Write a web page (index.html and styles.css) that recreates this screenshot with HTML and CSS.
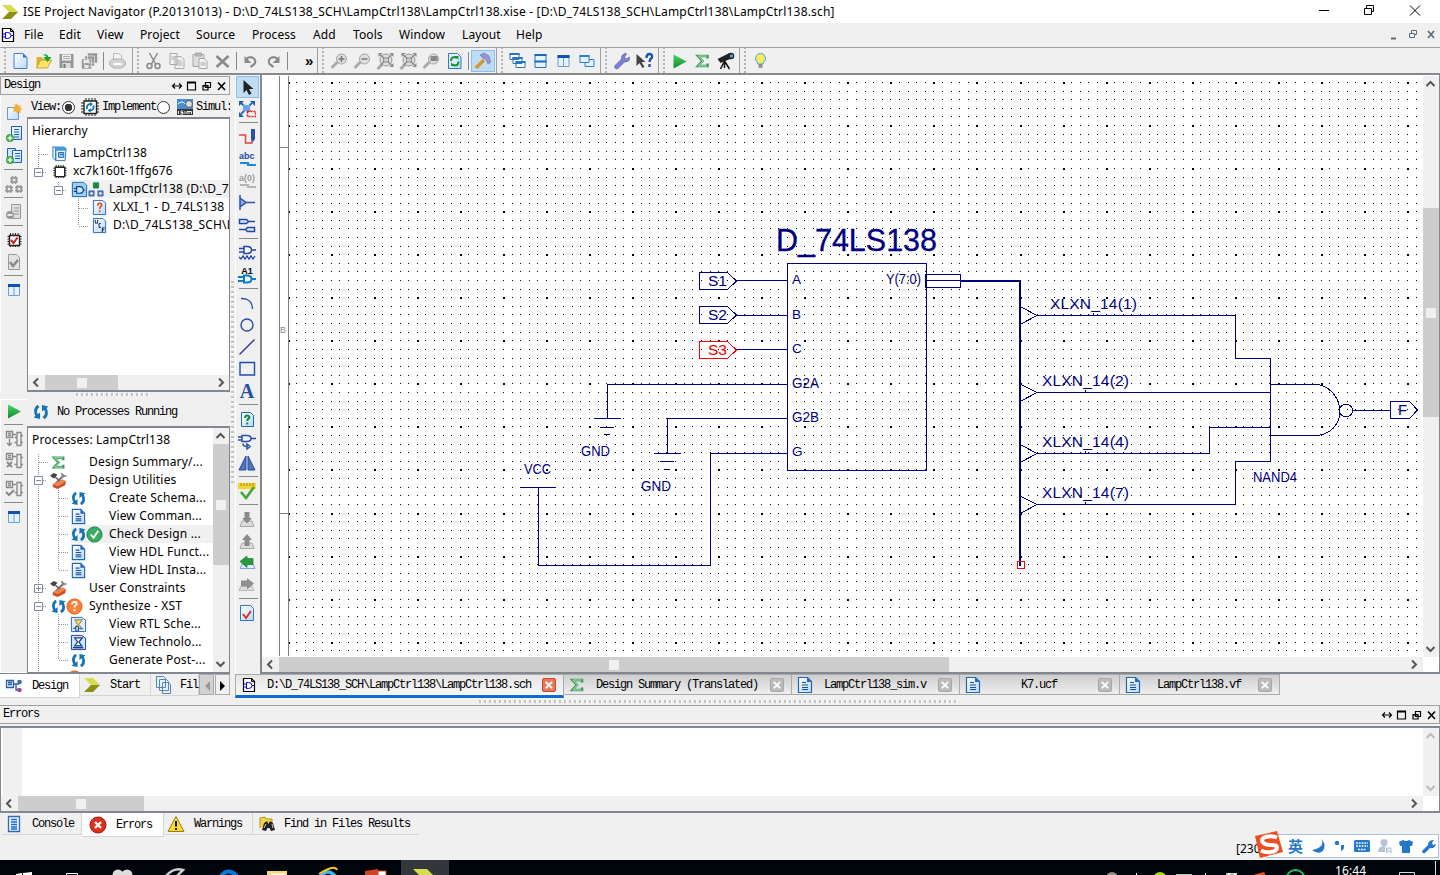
FILE: index.html
```html
<!DOCTYPE html>
<html lang="en">
<head>
<meta charset="utf-8">
<title>ISE Project Navigator</title>
<link rel="stylesheet" href="styles.css">
</head>
<body>
<svg class="defs" width="0" height="0">
  <defs>
    <linearGradient id="gPage" x1="0" y1="0" x2="1" y2="1"><stop offset="0" stop-color="#fff"/><stop offset="1" stop-color="#b9d8fb"/></linearGradient>
    <linearGradient id="gGreen" x1="0" y1="0" x2="0" y2="1"><stop offset="0" stop-color="#4fd467"/><stop offset="1" stop-color="#0a8a2a"/></linearGradient>
    <symbol id="chev" viewBox="0 0 18 18"><path d="M1 2h9l7 7H8z" fill="#d7dc4e"/><path d="M8 9h9l-7 7H1z" fill="#8b8f14"/></symbol>
    <symbol id="sch" viewBox="0 0 18 18"><path d="M3.500 2.500h8l3 3v10h-11z" fill="#fff" stroke="#000" stroke-width="1.200"/><path d="M11.500 2.500v3h3" fill="none" stroke="#000"/><path d="M6.500 6.500h2q3.500 0 3.500 3t-3.500 3h-2zM4 8h2.500m-2.500 3h2.500m5.500-1.500h2" fill="none" stroke="#00f"/></symbol>
    <symbol id="new" viewBox="0 0 18 18"><path d="M2.500 1.500h9l4 4v11h-13z" fill="url(#gPage)" stroke="#4a7fd0"/><path d="M11.500 1.500v4h4z" fill="#2f6bd0"/></symbol>
    <symbol id="open" viewBox="0 0 18 18"><path d="M2 16V5h5l2 2h5v3" fill="#d9b32e"/><path d="M2 16l4-8h11l-4 8z" fill="#ffe268" stroke="#b48b12" stroke-width=".7"/><path d="M8 3q5-2 6 2h3l-4 5-4-5h3q-1-2-4-2z" fill="#18a432"/></symbol>
    <symbol id="save" viewBox="0 0 18 18"><path d="M2 2h14v14H2z" fill="#979797"/><path d="M4.500 2.500h9v6h-9z" fill="#eee"/><path d="M5.500 4.500h7m-7 2h7" stroke="#aaa"/><path d="M5 11h8v5H5z" fill="#dadada"/><path d="M6 12h2v4H6z" fill="#777"/></symbol>
    <symbol id="saveall" viewBox="0 0 18 18"><g stroke="#eee" stroke-width=".6" fill="#979797"><path d="M7 1h10v10H7zM4 4h10v10H4zM1 7h10v10H1z"/></g><path d="M3 8h6v3H3zM4 13h4v3H4z" fill="#e8e8e8"/></symbol>
    <symbol id="print" viewBox="0 0 18 18"><path d="M5 8V1.500h5l3 2V8" fill="#f5f5f5" stroke="#bbb"/><path d="M1 10l3-3h10l3 3v3l-4 3H5l-4-3z" fill="#d2d2d2" stroke="#b0b0b0"/><path d="M5 12h8" stroke="#fff" stroke-width="2"/></symbol>
    <symbol id="cut" viewBox="0 0 18 18"><g fill="none" stroke="#8a8a8a" stroke-width="1.500"><path d="M5 1l6 11M13 1L7 12"/><circle cx="5" cy="14" r="2.500"/><circle cx="13" cy="14" r="2.500"/></g></symbol>
    <symbol id="copy" viewBox="0 0 18 18"><g fill="#f1f1f1" stroke="#aaa"><path d="M2.500 1.500h7v11h-7zM7.500 4.500h6l3 3v9h-9z"/><path d="M9 9h5m-5 2h6m-6 2h6M4 5h3m-3 2h3"/></g></symbol>
    <symbol id="paste" viewBox="0 0 18 18"><g fill="#ddd" stroke="#a5a5a5"><path d="M2.500 2.500h11v12h-11z"/><path d="M5 1h6v3H5z" fill="#bbb"/><path d="M8.500 6.500h5l3 3v7h-8z" fill="#f3f3f3"/><path d="M10 11h5m-5 2h5"/></g></symbol>
    <symbol id="del" viewBox="0 0 18 18"><path d="M3 4l12 11M15 4L3 15" stroke="#8b8b8b" stroke-width="2.800"/></symbol>
    <symbol id="undo" viewBox="0 0 18 18"><path d="M4 8c5-6 12-1 9 4l-4 3" fill="none" stroke="#8b8b8b" stroke-width="2.200"/><path d="M3 4v7h7z" fill="#8b8b8b"/></symbol>
    <symbol id="redo" viewBox="0 0 18 18"><path d="M14 8c-5-6-12-1-9 4l4 3" fill="none" stroke="#8b8b8b" stroke-width="2.200"/><path d="M15 4v7H8z" fill="#8b8b8b"/></symbol>
    <symbol id="mag" viewBox="0 0 18 18"><path d="M1 16l6-6" stroke="#aaa" stroke-width="3"/><circle cx="11" cy="7" r="5" fill="#dedede" stroke="#a3a3a3"/></symbol>
    <symbol id="zin" viewBox="0 0 18 18"><use href="#mag"/><path d="M8 7h6m-3-3v6" stroke="#777" stroke-width="1.500"/></symbol>
    <symbol id="zout" viewBox="0 0 18 18"><use href="#mag"/><path d="M8 7h6" stroke="#777" stroke-width="1.500"/></symbol>
    <symbol id="zfit" viewBox="0 0 18 18"><path d="M1 17l5-5" stroke="#aaa" stroke-width="3"/><circle cx="9.500" cy="8" r="6" fill="#ddd" stroke="#999"/><path d="M4 3l11 10M15 3L4 13" stroke="#888" stroke-width="1.200"/><path d="M7 6h5v4H7z" fill="#ccc" stroke="#777" stroke-width=".7"/><path d="M2 1h4L2 5zM17 1h-4l4 4zM17 15h-4l4-4z" fill="#888"/></symbol>
    <symbol id="zbox" viewBox="0 0 18 18"><use href="#mag"/><path d="M8 4h7v5H8z" fill="#888"/></symbol>
    <symbol id="refresh" viewBox="0 0 18 18"><path d="M3 1.500h9l3.500 3.500v11.500H3z" fill="url(#gPage)" stroke="#2c7bd0"/><path d="M5.500 9q0-4 4-4l2 1M13 9.500q0 4-4 4l-2-1" fill="none" stroke="#14962e" stroke-width="2"/><path d="M10 4h3v4zM8.500 14h-3v-4z" fill="#14962e"/></symbol>
    <symbol id="hammer" viewBox="0 0 18 18"><path d="M2 16l8-8" stroke="#d9952a" stroke-width="3.400"/><path d="M6 3l4-2 5 3 1 4 1 2-3 2-2-5-3-1z" fill="#9696cf" stroke="#6b6ba8" stroke-width=".6"/></symbol>
    <symbol id="cascade" viewBox="0 0 18 18"><g fill="#fff" stroke="#2775bf"><path d="M1.500 1.500h9v6h-9zM4.500 5.500h9v6h-9zM7.500 9.500h9v6h-9z"/><path d="M1 2h10M4 6h10M7 10h10" stroke-width="2"/></g></symbol>
    <symbol id="tileh" viewBox="0 0 18 18"><path d="M3.500 2.500h11v13h-11z" fill="#e5f2ff" stroke="#2775bf"/><path d="M3 3h12M3 9.500h12" stroke="#1d67bd" stroke-width="2"/></symbol>
    <symbol id="tilev" viewBox="0 0 18 18"><path d="M3.500 3.500h11v11h-11zM9 3v12" fill="#e5f2ff" stroke="#6d9fd6"/><path d="M3 4.500h12" stroke="#0e50b5" stroke-width="3"/></symbol>
    <symbol id="float" viewBox="0 0 18 18"><g fill="#e5f2ff" stroke="#2a80d6"><path d="M7.500 7.500h9v7h-9z"/><path d="M2.500 3.500h9v7h-9z"/><path d="M2 4h10" stroke-width="2"/></g></symbol>
    <symbol id="wrench" viewBox="0 0 18 18"><path d="M2 14l7-7q-1-4 4-6l1 1-2 3 2 2 3-2q1 5-5 5l-7 7q-3 0-3-3z" fill="#7d80cc" stroke="#5557a0" stroke-width=".6"/></symbol>
    <symbol id="what" viewBox="0 0 18 18"><path d="M1 2v12l3-3 3 5 2-1-3-5h4z" fill="#444"/><path d="M11 6q0-4 3-4t2.500 3.500q-2.500 2-2.500 4.500M14 12v3" fill="none" stroke="#1550b5" stroke-width="2.300"/></symbol>
    <symbol id="play" viewBox="0 0 18 18"><path d="M3 2.500l13 7-13 7z" fill="url(#gGreen)"/></symbol>
    <symbol id="sigma" viewBox="0 0 18 18"><path d="M14 6.500V4H4.500L9 9l-4.500 5H14v-2.500" fill="none" stroke="#3c9a5c" stroke-width="2.600"/><path d="M13.500 4H5l4.500 5L5 14h8.500" fill="none" stroke="#b9ebc6" stroke-width=".9"/></symbol>
    <symbol id="scope" viewBox="0 0 18 18"><path d="M1 7l12-6 3 5-12 5z" fill="#222"/><circle cx="14.500" cy="4" r="3.300" fill="#222"/><circle cx="15" cy="4" r="1.700" fill="#49a8d8"/><path d="M8 9l-4 8M8 9v7M8 9l5 8" stroke="#111" stroke-width="1.500"/></symbol>
    <symbol id="bulb" viewBox="0 0 18 18"><path d="M6.500 12q0-2-2.500-4 0-6.500 5-6.500t5 6.500q-2.500 2-2.500 4z" fill="#ffe95d" stroke="#49a2e8"/><path d="M7 13h4M7 15h4" stroke="#777" stroke-width="1.600"/></symbol>
    <symbol id="page" viewBox="0 0 18 18"><path d="M2.500 1.500h9l4 4v11h-13z" fill="url(#gPage)" stroke="#2465b8" stroke-width="1.200"/><path d="M11 1.500v4.500h4.500" fill="#2465b8"/><path d="M6 6.500h4m-4 2.500h6m-6 2.500h6m-6 2h6" stroke="#164fa0" stroke-width="1.200"/></symbol>
    <symbol id="newsrc" viewBox="0 0 18 18"><path d="M2.500 4.500h11v12h-11z" fill="url(#gPage)" stroke="#6e96d0"/><path d="M12 0l1 3 3-1-1 3 3 1-3 1 1 3-3-1-1 2-1-3-3 1 1-3-2-1 3-1-1-3 2 1z" fill="#f4ac34"/></symbol>
    <symbol id="addsrc" viewBox="0 0 18 18"><path d="M6.500 1.500h10v13h-10z" fill="url(#gPage)" stroke="#1e62be"/><path d="M9 4.500h5m-5 2.500h5m-5 2.500h5m-5 2.500h5" stroke="#1e62be"/><circle cx="5" cy="13" r="4" fill="#36a943"/><path d="M2.500 13h5M5 10.500v5" stroke="#fff" stroke-width="1.500"/></symbol>
    <symbol id="addcopy" viewBox="0 0 18 18"><path d="M2.500 1.500h8v11h-8z" fill="#cfe5ff" stroke="#1e62be"/><path d="M7.500 3.500h9v12h-9z" fill="url(#gPage)" stroke="#1e62be"/><path d="M10 6.500h5m-5 2.500h5m-5 2.500h5" stroke="#1e62be"/><circle cx="5" cy="13" r="4" fill="#36a943"/><path d="M2.500 13h5M5 10.500v5" stroke="#fff" stroke-width="1.500"/></symbol>
    <symbol id="cell" viewBox="0 0 8 8"><path d="M1.500 1.500h5v5h-5z" fill="none" stroke="currentColor" stroke-width="1.500"/><path d="M2.500 0v8M5.500 0v8M0 2.500h8M0 5.500h8" stroke="currentColor" stroke-width=".9"/><path d="M2.800 2.800h2.400v2.400H2.800z" fill="#eee"/></symbol>
    <symbol id="blocks" viewBox="0 0 18 18"><g color="#999"><use href="#cell" x="5" y="1" width="8" height="8"/><use href="#cell" x="0" y="10" width="8" height="8"/><use href="#cell" x="10" y="10" width="8" height="8"/></g></symbol>
    <symbol id="rmsrc" viewBox="0 0 18 18"><path d="M6.500 1.500h9v14h-9z" fill="#ddd" stroke="#999"/><path d="M9 5h5m-5 3h5m-5 3h5" stroke="#999"/><circle cx="5" cy="12" r="4" fill="#999"/><path d="M2.500 12h5" stroke="#fff" stroke-width="1.500"/></symbol>
    <symbol id="chip" viewBox="0 0 18 18"><path d="M5.500 2v14M8 2v14M10.500 2v14M13 2v14M2.500 5.500h14M2.500 8h14M2.500 10.500h14M2.500 13h14" stroke="#222"/><path d="M4.500 4.500h10v10h-10z" fill="#fff" stroke="#222" stroke-width="1.400"/></symbol>
    <symbol id="chipred" viewBox="0 0 18 18"><use href="#chip"/><path d="M6 9l2.500 3 4-5.500" fill="none" stroke="#c22" stroke-width="2"/></symbol>
    <symbol id="chipblue" viewBox="0 0 18 18"><path d="M5 0v18M8 0v18M11 0v18M14 0v18M0 5h18M0 8h18M0 11h18M0 14h18" stroke="#222"/><path d="M3 3h12.500v12.500H3z" fill="#fff" stroke="#222" stroke-width="1.400"/><path d="M6 11q-1-5 4-5M12.500 7.500q1 5-4 5" fill="none" stroke="#0b72c0" stroke-width="1.800"/><path d="M9 4l3 2-3 2.500zM9.500 10l-3 2.500 3 2z" fill="#0b72c0"/></symbol>
    <symbol id="isim" viewBox="0 0 18 18"><path d="M1 1h16v10H1z" fill="#438fd5"/><path d="M2 6q4-4 7 0t7-1" fill="none" stroke="#fff"/><circle cx="13" cy="6" r="3.500" fill="#ddd" stroke="#555"/><path d="M1 11h16v6H1z" fill="#333"/><path d="M2.500 13v3M7 13H5v1.500h2V16H4.500M9 13v3M11 16v-2.500h2V16m0-2.500h2.500V16" fill="none" stroke="#fff" stroke-width=".9"/></symbol>
    <symbol id="docgray" viewBox="0 0 18 18"><path d="M3.500 1.500h8l3 3v12h-11z" fill="#e2e2e2" stroke="#999"/><path d="M5 9l3 4 5-6" fill="none" stroke="#888" stroke-width="2.500"/></symbol>
    <symbol id="proc1" viewBox="0 0 18 18"><g fill="none" stroke="#8a8a8a" stroke-width="1.400"><path d="M1.500 1.500h6v6h-6zM3 3.500h3m-3 2h3M8 4.500h3M12 2.500h4v13h-4zM9.500 7.500H12M9.500 12.500H12M16 5.500h2m-2 7h2"/><path d="M4.500 9v6m-2.500-2l2.500 2.500L7 13"/></g></symbol>
    <symbol id="proc2" viewBox="0 0 18 18"><g fill="none" stroke="#8a8a8a" stroke-width="1.400"><path d="M1.500 1.500h6v6h-6zM3 3.500h3m-3 2h3M8 4.500h3M12 2.500h4v13h-4zM9.500 12.500H12M16 5.500h2m-2 7h2"/><path d="M2 10l5 5m0-5l-5 5" stroke-width="2"/></g></symbol>
    <symbol id="proc3" viewBox="0 0 18 18"><g fill="none" stroke="#8a8a8a" stroke-width="1.400"><path d="M1.500 1.500h6v6h-6zM3 3.500h3m-3 2h3M8 4.500h3M12 2.500h4v13h-4zM9.500 12.500H12M16 5.500h2m-2 7h2"/><path d="M1 12l3 3 5-5" stroke-width="2"/></g></symbol>
    <symbol id="cycle" viewBox="0 0 18 18"><path d="M6.500 3q-5 3.500-1.500 10M11.500 15q5-3.500 1.500-10" fill="none" stroke="#1673b5" stroke-width="2.800"/><path d="M1.500 14.500l6.500 1.500V9.500zM16.500 3.500L10 2v6.500z" fill="#1673b5"/></symbol>
    <symbol id="tools" viewBox="0 0 18 18"><path d="M3 3l10 9" stroke="#777" stroke-width="2"/><path d="M0 4l4-3 4 2-4 4z" fill="#444"/><path d="M15 3l-9 9" fill="none" stroke="#666" stroke-width="2"/><path d="M12.500 1l1 4 4-1" fill="none" stroke="#888" stroke-width="1.800"/><path d="M3 13l10-5 4 2-1 4-8 4-5-2z" fill="#d04c26"/><path d="M3 13l10-5 4 2-9 5z" fill="#ee8250"/></symbol>
    <symbol id="ok" viewBox="0 0 18 18"><circle cx="9" cy="9" r="8" fill="#3aab63" stroke="#1c7a40"/><path d="M5 9l3 3.500L13 5" fill="none" stroke="#fff" stroke-width="2"/></symbol>
    <symbol id="q" viewBox="0 0 18 18"><circle cx="9" cy="9" r="8" fill="#fb8138" stroke="#d85510"/><path d="M6.500 7q0-3 2.500-3t2.500 2.500Q9 8 9 10M9 12v2" fill="none" stroke="#fff" stroke-width="1.800"/></symbol>
    <symbol id="rtl" viewBox="0 0 18 18"><path d="M1.500 1.500h11l4 3v12h-15z" fill="#e1efff" stroke="#2465b8"/><path d="M5 4h8l-3.500 5 3 4H5l3-4z" fill="#f2df52" stroke="#777"/><path d="M3 13h3m0-2h3v5H6zM10 13.500h4" stroke="#164fa0" fill="#bcd"/></symbol>
    <symbol id="tech" viewBox="0 0 18 18"><path d="M1.500 1.500h11l4 3v12h-15z" fill="#cfe4ff" stroke="#163d88"/><path d="M5 4h8l-3.500 4.500 3 4H5l3-4z" fill="#fff" stroke="#163d88" stroke-width="1.300"/><path d="M3 14.500h11" stroke="#163d88" stroke-width="1.500"/></symbol>
    <symbol id="proj" viewBox="0 0 18 18"><path d="M2 1.500l3 2v13l-3-3zM5 3.500h11l-1 13H5z" fill="#eaf5ff" stroke="#2878b8"/><path d="M2 1.500h12l2 2-.3 2.500H5V3.500z" fill="#429bdd"/><path d="M8 8h5.500v5H8zM9.500 10h3" fill="#9dd0f2" stroke="#1a5d9c"/></symbol>
    <symbol id="schblue" viewBox="0 0 18 18"><path d="M1.500 1.500h12l3 3v12h-15z" fill="#9cd0f7" stroke="#1767b3"/><path d="M6 6h3q4 0 4 3.500T9 13H6zM3 8h3m-3 3h3m7-1.500h2" fill="#c9e7fd" stroke="#123f80" stroke-width="1.200"/></symbol>
    <symbol id="hier" viewBox="0 0 18 18"><use href="#cell" x="5" y="1" width="8" height="8" color="#188640"/><g color="#4a72b5"><use href="#cell" x="0" y="10" width="8" height="8"/><use href="#cell" x="10" y="10" width="8" height="8"/></g><path d="M7 3h4v4H7z" fill="#188640"/></symbol>
    <symbol id="unk" viewBox="0 0 18 18"><path d="M2.500 1.500h10l3 3v12h-13z" fill="url(#gPage)" stroke="#2465b8"/><path d="M7 7q0-2.500 2.200-2.500T11.300 7Q9.200 8.500 9.200 10.500M9.200 12v2" fill="none" stroke="#e0512a" stroke-width="1.800"/></symbol>
    <symbol id="ucf" viewBox="0 0 18 18"><path d="M2.500 1.500h10l3 3v12h-13z" fill="url(#gPage)" stroke="#2465b8"/><path d="M4.500 3v3.500h2.500V3M10.500 7H8.500v4h2M14.500 11.500h-2.500V16m0-2.500h2" fill="none" stroke="#123"/></symbol>
    <symbol id="ptr" viewBox="0 0 18 18"><path d="M5 2v13l3-3 2.500 5 2.500-1.500-2.500-4.500h4.500z" fill="#222"/></symbol>
    <symbol id="selbox" viewBox="0 0 18 18"><path d="M3 3l10 9M14 3L3 14" stroke="#2b6bbd" stroke-width="1.800"/><path d="M1 1h5L1 6zM17 1h-5l5 5zM1 17h5l-5-5z" fill="#1a5db5"/><path d="M5 5h7v6H5z" fill="#63a7e8"/><path d="M9.500 11.500h8v5h-8z" fill="#fff" stroke="#e11" stroke-width="1.500" stroke-dasharray="2 1"/></symbol>
    <symbol id="wire" viewBox="0 0 18 18"><path d="M1 7h6.500v8h6.500V9" fill="none" stroke="#e0414a" stroke-width="1.500"/><path d="M13 1h4v10l-2 3-2-3z" fill="#2a4fae"/></symbol>
    <symbol id="bustap" viewBox="0 0 18 18"><path d="M2 1v15M2 4l6 4.500L2 13M8 8.500h9" fill="#8fb0e0" stroke="#2a50b0" stroke-width="1.500"/></symbol>
    <symbol id="iomark" viewBox="0 0 18 18"><path d="M1.500 3.500h7l2 2-2 2h-7zM11 5.500h6M16.500 11.500h-7l-2 2 2 2h7zM7 13.500H1" fill="#dbe7fb" stroke="#2346a5" stroke-width="1.500"/></symbol>
    <symbol id="gate" viewBox="0 0 18 18"><path d="M6 2.500h3q4.500 0 4.500 3.500T9 9.500H6zM1 4.500h5M1 8h5m7.500-2H18" fill="#fff" stroke="#2346a5" stroke-width="1.500"/><path d="M1 13l2 2 2-3 2 3 2-3 2 3 2-3 2 3 2-3" fill="none" stroke="#2346a5" stroke-width="1.300"/></symbol>
    <symbol id="gateA" viewBox="0 0 18 18"><path d="M6 8.500h3q4.500 0 4.500 3.500T9 15.500H6zM0 10h6m-6 4h6m7.500-2H18" fill="#fff" stroke="#087dcc" stroke-width="2"/></symbol>
    <symbol id="arc" viewBox="0 0 18 18"><path d="M3 4.500Q14 4 14.500 15" fill="none" stroke="#2450a8" stroke-width="1.300"/></symbol>
    <symbol id="circ" viewBox="0 0 18 18"><circle cx="9" cy="9" r="6" fill="none" stroke="#2450a8" stroke-width="1.400"/></symbol>
    <symbol id="line" viewBox="0 0 18 18"><path d="M1.500 16.500l15-15" stroke="#33359b" stroke-width="1.400"/></symbol>
    <symbol id="rect" viewBox="0 0 18 18"><path d="M2 2.500h14.500v12.500H2z" fill="none" stroke="#1d4ea8" stroke-width="1.400"/></symbol>
    <symbol id="qdoc" viewBox="0 0 18 18"><path d="M3.500 2.500h9l3 3v11h-12z" fill="url(#gPage)" stroke="#1d6bc0"/><path d="M7 8q0-2.500 2.200-2.500T11.300 8Q9.200 9 9.200 11M9.200 12.500v2" fill="none" stroke="#178a3a" stroke-width="2"/></symbol>
    <symbol id="push" viewBox="0 0 18 18"><path d="M4 3.500h5q4 0 4 3T9 9.500H4zM0 5h4m-4 3h4m9-1.500h5M5 11.500q0 3 4 3M9 12l3 2.500L9 17z" fill="none" stroke="#2450a8" stroke-width="1.500"/></symbol>
    <symbol id="mirror" viewBox="0 0 18 18"><path d="M8 2v14H1zM10 2v14h7z" fill="#5076b8" stroke="#2448a0"/></symbol>
    <symbol id="check" viewBox="0 0 18 18"><path d="M0 1h18v6H0z" fill="#f5d330"/><path d="M3 1v3m3-3v3m3-3v3m3-3v3m3-3v3" stroke="#a88a10"/><path d="M3 10l5 6L16 5" fill="none" stroke="#43a834" stroke-width="2.600"/></symbol>
    <symbol id="down" viewBox="0 0 18 18"><path d="M4 11l-2 5.500h14L14 11z" fill="#ddd" stroke="#aaa"/><path d="M6.500 2h5v6H14l-5 5.500L4 8h2.500z" fill="#8a8a8a"/></symbol>
    <symbol id="up" viewBox="0 0 18 18"><path d="M4 11l-2 5.500h14L14 11z" fill="#ddd" stroke="#aaa"/><path d="M6.500 14h5V8H14L9 2 4 8h2.500z" fill="#8a8a8a"/></symbol>
    <symbol id="left" viewBox="0 0 18 18"><path d="M4 10h11l2 4.500H2z" fill="#dceeff" stroke="#7aa7d6"/><path d="M15 4.500v6H9v3L2 7.500 9 2v2.500z" fill="#279a3b" stroke="#0c6f20" stroke-width=".6"/></symbol>
    <symbol id="right" viewBox="0 0 18 18"><path d="M3 10h11l2 4.500H1z" fill="#ddd" stroke="#bbb"/><path d="M3 4.500v6h6v3l7-6L9 2v2.500z" fill="#8f8f8f"/></symbol>
    <symbol id="redcheck" viewBox="0 0 18 18"><path d="M2.500 1.500h10l3 3v12h-13z" fill="url(#gPage)" stroke="#2b79cc"/><path d="M5 10l3 4 5-7" fill="none" stroke="#e23030" stroke-width="2"/></symbol>
    <symbol id="design" viewBox="0 0 18 18"><path d="M1.500 3.500h7v7h-7zM3 5.500h4m-4 2h4M9 7h5M11 7v6h3" fill="#dbe9fb" stroke="#2b5f9f" stroke-width="1.300"/><circle cx="14.500" cy="5" r="2.300" fill="#3d6aa5"/><circle cx="14.500" cy="13" r="2.300" fill="#a34b86"/></symbol>
    <symbol id="files" viewBox="0 0 18 18"><g fill="#e8f1fc" stroke="#5584bf"><path d="M1.500.5h7l2 2v9h-9zM4.500 3.500h7l2 2v9h-9zM7.500 6.500h6l2 2v9h-8z"/></g></symbol>
    <symbol id="console" viewBox="0 0 18 18"><path d="M3.500 1.500h11v15h-11z" fill="#eef6ff" stroke="#3168bd" stroke-width="1.300"/><path d="M6 4.500h6m-6 2.500h6m-6 2.500h6m-6 2.500h6m-6 2h6" stroke="#1b6bd0" stroke-width="1.300"/></symbol>
    <symbol id="err" viewBox="0 0 18 18"><circle cx="9" cy="9" r="8" fill="#e0301c" stroke="#a81606"/><path d="M6 6l6 6m0-6l-6 6" stroke="#fff" stroke-width="2.400"/></symbol>
    <symbol id="warn" viewBox="0 0 18 18"><path d="M9 1.500l8 15H1z" fill="#ffdc28" stroke="#9c7b10"/><path d="M9 6v5.500m0 1.500v2" stroke="#111" stroke-width="2"/></symbol>
    <symbol id="find" viewBox="0 0 18 18"><path d="M2 13V3l5-1 1 2h6v4" fill="#f4d64b" stroke="#b59618"/><path d="M6 8l3-2 1.500 3L12 6l3 2 2 7-4 1-1.500-3h-2L8 16l-4-1z" fill="#222"/><path d="M6 13l2-4m7 4l-1-4" stroke="#ccc"/></symbol>
    <symbol id="dock" viewBox="0 0 58 14"><g fill="none" stroke="#000" stroke-width="1.200"><path d="M1.500 7h9M4 4.500L1.500 7 4 9.500M8 4.500L10.500 7 8 9.500"/><path d="M16.500 3h8v8h-8zM16 4h9"/><path d="M34.500 3.500h5v5h-5zM32 6.500h5v4.500h-5zM34 3.500h6M31.500 7h6" fill="#f0f0f0"/><path d="M47 3.500l7 7.500M54 3.500L47 11" stroke-width="1.600"/></g></symbol>
  </defs>
</svg>

<div class="app">
  <header class="titlebar">
    <svg class="i18"><use href="#chev"/></svg>
    <span class="title">ISE Project Navigator (P.20131013) - D:\D_74LS138_SCH\LampCtrl138\LampCtrl138.xise - [D:\D_74LS138_SCH\LampCtrl138\LampCtrl138.sch]</span>
    <svg class="winctl" width="130" height="23" viewBox="1310 0 130 23" fill="none" stroke="#000"><path d="M1319 10.500h10M1364.500 8.500h7v6h-7zM1366.500 8v-2.500h7v6h-2M1410 5.500l10 10m0-10l-10 10"/></svg>
  </header>

  <nav class="menubar">
    <svg class="i18"><use href="#sch"/></svg>
    <span class="m-file">File</span><span class="m-edit">Edit</span><span class="m-view">View</span><span class="m-project">Project</span><span class="m-source">Source</span><span class="m-process">Process</span><span class="m-add">Add</span><span class="m-tools">Tools</span><span class="m-window">Window</span><span class="m-layout">Layout</span><span class="m-help">Help</span>
    <svg class="winctl" width="56" height="23" viewBox="1384 23 56 23" fill="none" stroke="#5a6a7a"><path d="M1391 37.500h5" stroke-width="2"/><path d="M1409.500 32.500h5v4h-5zM1411.500 32v-2.500h5v4h-2"/><path d="M1428 30l6 7m0-7l-6 7" stroke-width="1.600"/></svg>
  </nav>

  <div class="toolbar">
    <div class="group g1"><svg><use href="#new"/></svg><svg><use href="#open"/></svg><svg><use href="#save"/></svg><svg><use href="#saveall"/></svg><i></i><svg><use href="#print"/></svg></div>
    <div class="group g2"><svg><use href="#cut"/></svg><svg><use href="#copy"/></svg><svg><use href="#paste"/></svg><svg><use href="#del"/></svg><i></i><svg><use href="#undo"/></svg><svg><use href="#redo"/></svg><i></i><b>»</b></div>
    <div class="group g3"><svg><use href="#zin"/></svg><svg><use href="#zout"/></svg><svg><use href="#zfit"/></svg><svg><use href="#zfit"/></svg><svg><use href="#zbox"/></svg><svg><use href="#refresh"/></svg><i></i><svg class="on"><use href="#hammer"/></svg></div>
    <div class="group g4"><svg><use href="#cascade"/></svg><svg><use href="#tileh"/></svg><svg><use href="#tilev"/></svg><svg><use href="#float"/></svg></div>
    <div class="group g5"><svg><use href="#wrench"/></svg><svg><use href="#what"/></svg></div>
    <div class="group g6"><svg><use href="#play"/></svg><svg><use href="#sigma"/></svg><svg><use href="#scope"/></svg></div>
    <div class="group g7"><svg><use href="#bulb"/></svg></div>
  </div>

  <main class="workspace">
    <aside class="dock">
      <div class="dockhead mono"><span>Design</span><svg width="58" height="14"><use href="#dock"/></svg></div>
      <section class="panel hierarchy">
        <div class="rail"><svg><use href="#newsrc"/></svg><svg><use href="#addsrc"/></svg><svg><use href="#addcopy"/></svg><i></i><svg><use href="#blocks"/></svg><i></i><svg><use href="#rmsrc"/></svg><i></i><svg><use href="#chipred"/></svg><svg><use href="#docgray"/></svg><i></i><svg><use href="#tilev"/></svg></div>
        <div class="content">
          <div class="viewrow mono"><span>View:</span><u class="radio sel"></u><svg class="i18 chipicon"><use href="#chipblue"/></svg><span>Implement</span><u class="radio"></u><svg class="i18 simicon"><use href="#isim"/></svg><span>Simul:</span></div>
          <div class="treebox">
            <div class="stack">
              <svg class="guides" width="201" height="256" viewBox="29 118 201 256"><path d="M38.500 145v26M39 153.500h9M43 171.500h4M58.500 181v8M63 189.500h4M78.500 197v28M79 207.500h9M79 225.500h9" class="dot"/><g class="box"><path d="M34.500 167.500h8v8h-8zM36 171.500h5M54.500 185.500h8v8h-8zM56 189.500h5"/></g></svg>
              <ul class="tree">
                <li class="head">Hierarchy</li>
                <li class="l1"><svg><use href="#proj"/></svg>LampCtrl138</li>
                <li class="l1"><svg><use href="#chip"/></svg>xc7k160t-1ffg676</li>
                <li class="l2 cur"><svg><use href="#schblue"/></svg><svg class="second"><use href="#hier"/></svg>LampCtrl138 (D:\D_74LS138</li>
                <li class="l3"><svg><use href="#unk"/></svg>XLXI_1 - D_74LS138</li>
                <li class="l3"><svg><use href="#ucf"/></svg>D:\D_74LS138_SCH\LampCtrl</li>
              </ul>
            </div>
            <div class="hbar"><svg width="16" height="15"><path d="M10 3.500l-4 4 4 4"/></svg><s class="t1"></s><svg width="16" height="15" class="end"><path d="M6 3.500l4 4-4 4"/></svg></div>
          </div>
        </div>
      </section>
      <div class="hsplit"><i></i></div>
      <section class="panel processes">
        <div class="rail r2"><svg><use href="#play"/></svg><i></i><svg><use href="#proc1"/></svg><svg><use href="#proc2"/></svg><i></i><svg><use href="#proc3"/></svg><i></i><svg><use href="#tilev"/></svg></div>
        <div class="content">
          <div class="running mono"><svg class="i18"><use href="#cycle"/></svg><span>No Processes Running</span></div>
          <div class="procbox">
            <div class="stack">
              <svg class="guides" width="184" height="245" viewBox="29 428 184 245"><path d="M38.500 454v220M39 462.500h9M43 480.500h4M58.500 488v82M59 498.500h9M59 516.500h9M59 534.500h9M59 552.500h9M59 570.500h9M43 588.500h4M43 606.500h4M58.500 614v46M59 624.500h9M59 642.500h9M59 660.500h9" class="dot"/><g class="box"><path d="M34.500 476.500h8v8h-8zM36 480.500h5M34.500 584.500h8v8h-8zM36 588.500h5M38.500 586v5M34.500 602.500h8v8h-8zM36 606.500h5"/></g></svg>
              <ul class="tree proc">
                <li class="head">Processes: LampCtrl138</li>
                <li class="p1"><svg><use href="#sigma"/></svg><span>Design Summary/...</span></li>
                <li class="p1"><svg><use href="#tools"/></svg><span>Design Utilities</span></li>
                <li class="p2"><svg><use href="#cycle"/></svg><span>Create Schema...</span></li>
                <li class="p2"><svg><use href="#page"/></svg><span>View Comman...</span></li>
                <li class="p2 cur two"><svg><use href="#cycle"/></svg><svg><use href="#ok"/></svg><span>Check Design ...</span></li>
                <li class="p2"><svg><use href="#page"/></svg><span>View HDL Funct...</span></li>
                <li class="p2"><svg><use href="#page"/></svg><span>View HDL Insta...</span></li>
                <li class="p1"><svg><use href="#tools"/></svg><span>User Constraints</span></li>
                <li class="p1 two"><svg><use href="#cycle"/></svg><svg><use href="#q"/></svg><span>Synthesize - XST</span></li>
                <li class="p2"><svg><use href="#rtl"/></svg><span>View RTL Sche...</span></li>
                <li class="p2"><svg><use href="#tech"/></svg><span>View Technolo...</span></li>
                <li class="p2"><svg><use href="#cycle"/></svg><span>Generate Post-...</span></li>
                <li class="p1 two"><svg><use href="#cycle"/></svg><svg><use href="#q"/></svg></li>
              </ul>
            </div>
            <div class="vbar"><svg width="15" height="16"><path d="M3.500 10l4-4 4 4"/></svg><s class="t2"></s><svg width="15" height="16" class="end"><path d="M3.500 6l4 4 4-4"/></svg></div>
          </div>
        </div>
      </section>
      <div class="sidetabs mono">
        <div class="st on"><svg class="i18"><use href="#design"/></svg>Design</div>
        <div class="st s2"><svg class="i18"><use href="#chev"/></svg>Start</div>
        <div class="st s3"><svg class="i18"><use href="#files"/></svg>Fil</div>
        <div class="arrow off"><svg width="14" height="21"><path d="M10 6v10l-5-5z" fill="#999"/></svg></div>
        <div class="arrow"><svg width="14" height="21"><path d="M4 6v10l5-5z"/></svg></div>
      </div>
    </aside>

    <div class="vsplit"><i></i></div>

    <section class="editor">
      <div class="editrow">
        <div class="drawbar"><svg class="on"><use href="#ptr"/></svg><svg><use href="#selbox"/></svg><i></i><svg><use href="#wire"/></svg><div class="lbl"><span>abc</span><em></em></div><div class="lbl dim"><span>a(0)</span><em></em></div><svg><use href="#bustap"/></svg><svg><use href="#iomark"/></svg><i></i><svg><use href="#gate"/></svg><div class="a1"><span>A1</span><svg><use href="#gateA"/></svg></div><i></i><svg><use href="#arc"/></svg><svg><use href="#circ"/></svg><svg><use href="#line"/></svg><svg><use href="#rect"/></svg><div class="bigA">A</div><i></i><svg><use href="#qdoc"/></svg><svg><use href="#push"/></svg><svg><use href="#mirror"/></svg><i></i><svg><use href="#check"/></svg><i></i><svg><use href="#down"/></svg><svg><use href="#up"/></svg><svg><use href="#left"/></svg><svg><use href="#right"/></svg><i></i><svg><use href="#redcheck"/></svg></div>
        <div class="canvasframe">
          <div class="canvasrow">
            <svg class="schematic" width="1161" height="580" viewBox="262 76 1161 580">
              <path id="grid" fill="#000"/>
              <path d="M279.500 76v580M288.500 76v580M279 147.500h9M279 513.500h9" fill="none" stroke="#808080"/>
              <text x="280" y="333" font-size="9" class="sheet">B</text>
              <g class="net">
                <path d="M787.500 263.500h139v207h-139zM925.500 274.500h35v13h-35zM926 280.500h34"/>
                <path d="M699.500 272.500h28l9 8.500-9 8.500h-28zM699.500 306.500h28l9 8.500-9 8.500h-28zM736 280.500h51M736 315.500h51M736 349.500h51"/>
                <path d="M787 384.500H607.500v34M594 418.500h27M600 427.500h14M604 434.500h6M787 418.500H667.500v35M654 453.500h27M660 461.500h14M664 469.500h6M787 453.500h-76.500v112h-172v-78M521 487.500h35"/>
                <path d="M1021 307l16 8.500-16 8.500M1021 384.500l16 8-16 8.500M1021 445l16 8.500-16 8.500M1021 496.500l16 8-16 8.500"/>
                <path d="M1037 315.500h198.500v43h35v103h-35v43H1037M1037 392.500h233M1037 453.500h172.500v-26h61M1270 384.500h49c29 8 28 51-5 51h-44M1093.500 313v2M1085.500 390v2M1085.500 451v2M1085.500 502v2"/>
                <circle cx="1346" cy="410.500" r="6.500"/>
                <path d="M1352 410.500h38M1390.500 401.500h19l8 8.500-8 8.500h-19z"/>
                <path d="M960 281h60v285" stroke-width="2"/>
              </g>
              <path d="M699.500 341.500h28l9 8.500-9 8.500h-28zM1017.500 561.500h7v7h-7z" fill="none" stroke="#f00"/>
              <g class="labels">
                <text x="776" y="251" font-size="30.500" textLength="161" lengthAdjust="spacingAndGlyphs" class="part">D_74LS138</text>
                <text x="708" y="286" font-size="15.500" textLength="19" lengthAdjust="spacingAndGlyphs">S1</text>
                <text x="708" y="320" font-size="15.500" textLength="19" lengthAdjust="spacingAndGlyphs">S2</text>
                <text x="708" y="355" font-size="15.500" textLength="19" lengthAdjust="spacingAndGlyphs" class="red">S3</text>
                <text x="792" y="284" font-size="13.500">A</text><text x="792" y="319" font-size="13.500">B</text><text x="792" y="353" font-size="13.500">C</text>
                <text x="792" y="388" font-size="14" textLength="27" lengthAdjust="spacingAndGlyphs">G2A</text><text x="792" y="422" font-size="14" textLength="27" lengthAdjust="spacingAndGlyphs">G2B</text><text x="792" y="456" font-size="13.500">G</text>
                <text x="886" y="284" font-size="14" textLength="35" lengthAdjust="spacingAndGlyphs">Y(7:0)</text>
                <text x="581" y="456" font-size="14" textLength="29" lengthAdjust="spacingAndGlyphs">GND</text><text x="641" y="491" font-size="14" textLength="30" lengthAdjust="spacingAndGlyphs">GND</text><text x="524" y="474" font-size="14" textLength="27" lengthAdjust="spacingAndGlyphs">VCC</text>
                <text x="1050" y="309" font-size="15.500" textLength="87">XLXN_14(1)</text><text x="1042" y="386" font-size="15.500" textLength="87">XLXN_14(2)</text><text x="1042" y="447" font-size="15.500" textLength="87">XLXN_14(4)</text><text x="1042" y="498" font-size="15.500" textLength="87">XLXN_14(7)</text>
                <text x="1253" y="482" font-size="14" textLength="44" lengthAdjust="spacingAndGlyphs">NAND4</text><text x="1398" y="415" font-size="15">F</text>
              </g>
            </svg>
            <div class="vbar"><svg width="15" height="16"><path d="M3.500 10l4-4 4 4"/></svg><s class="t3"></s><svg width="15" height="16" class="end"><path d="M3.500 6l4 4 4-4"/></svg></div>
          </div>
          <div class="hbar wide"><svg width="17" height="15"><path d="M10 3.500l-4 4 4 4"/></svg><s class="t4"></s><svg width="17" height="15" class="end"><path d="M6 3.500l4 4-4 4"/></svg></div>
        </div>
      </div>
      <div class="doctabs mono">
        <div class="dt on d1"><svg class="i18"><use href="#sch"/></svg><span>D:\D_74LS138_SCH\LampCtrl138\LampCtrl138.sch</span><u>×</u></div>
        <div class="dt d2"><svg class="i18"><use href="#sigma"/></svg><span>Design Summary (Translated)</span><u>×</u></div>
        <div class="dt d3"><svg class="i18"><use href="#page"/></svg><span>LampCtrl138_sim.v</span><u>×</u></div>
        <div class="dt d4"><svg class="i18"><use href="#page"/></svg><span>K7.ucf</span><u>×</u></div>
        <div class="dt d5"><svg class="i18"><use href="#page"/></svg><span>LampCtrl138.vf</span><u>×</u></div>
      </div>
    </section>
  </main>

  <div class="bigsplit"><i></i></div>
  <div class="dockhead errhead mono"><span>Errors</span><svg width="58" height="14"><use href="#dock"/></svg></div>
  <section class="errbox">
    <div class="errrow"><i></i><div class="vbar dimbar"><svg width="15" height="16"><path d="M3.500 10l4-4 4 4"/></svg><svg width="15" height="16" class="end"><path d="M3.500 6l4 4 4-4"/></svg></div></div>
    <div class="hbar wide"><svg width="16" height="15"><path d="M10 3.500l-4 4 4 4"/></svg><s class="t5"></s><svg width="17" height="15" class="end"><path d="M6 3.500l4 4-4 4"/></svg></div>
  </section>
  <div class="bottomtabs mono">
    <div class="bt b1"><svg class="i18"><use href="#console"/></svg>Console</div>
    <div class="bt b2 on"><svg class="i18"><use href="#err"/></svg>Errors</div>
    <div class="bt b3"><svg class="i18"><use href="#warn"/></svg>Warnings</div>
    <div class="bt b4"><svg class="i18"><use href="#find"/></svg>Find in Files Results</div>
  </div>
  <div class="status"><span>[230</span></div>

  <footer class="taskbar">
    <svg width="1440" height="15" viewBox="0 860 1440 15">
      <path d="M401 860h48v15h-48z" fill="#33363a"/>
      <path d="M16 875v-1l6-1v2zM23 873l9-1v3h-9z" fill="#fff"/>
      <path d="M66.500 876v-2.500h11v2.500" fill="none" stroke="#fff"/>
      <circle cx="118" cy="875" r="5.500" fill="#ddd"/><circle cx="127" cy="875" r="5.500" fill="#ddd"/>
      <path d="M166 876q8-9 17-6l-6 6" fill="none" stroke="#ccc" stroke-width="2.500"/>
      <path d="M221 876q7-9 16 0" fill="none" stroke="#0879d8" stroke-width="4"/>
      <path d="M267 871h20v5h-20z" fill="#f4d777"/><path d="M271 874h14" stroke="#fff4c0" stroke-width="2"/>
      <path d="M321 876q7-8 14 0" fill="none" stroke="#42b4ec" stroke-width="3.500"/><path d="M319 874q16-10 18-4" fill="none" stroke="#f4c325" stroke-width="2"/>
      <path d="M365 871l13-2v7h-13z" fill="#ce4427"/><path d="M378 871h8v5h-8z" fill="#fff" stroke="#ce4427"/>
      <path d="M413 869h14l6 6h-14z" fill="#d7dc4e"/>
      <circle cx="1112" cy="878" r="6" fill="#999184"/><path d="M1136.500 873v3M1205.500 873v3" stroke="#fff"/><circle cx="1160" cy="879" r="7" fill="#a5d91a"/><path d="M1176 875h16M1226 874h11M1229 873v3m6-3v3" stroke="#fff" stroke-width="1.500"/><path d="M1253 875l11-3 2 4h-12z" fill="#eb4a25"/><circle cx="1295.500" cy="879" r="9" fill="none" stroke="#18c46a" stroke-width="2"/>
      <text x="1335" y="874.500" textLength="31" class="clock">16:44</text>
      <path d="M1399.500 876v-3.500h15v3.500M1435.500 861v15" fill="none" stroke="#ddd"/>
    </svg>
  </footer>
</div>

<div class="ime">
  <svg width="184" height="30" viewBox="1254 830 184 30">
    <path d="M1255 836l22-5 6 21-23 6z" fill="#ee4f22"/>
    <path d="M1277 837.500c-8-3-18 0-14 5s14 0 14 5-10 6-16 3" fill="none" stroke="#fff" stroke-width="4"/>
    <text x="1288" y="852" class="ying">英</text>
    <path d="M1321 839q5 8-9 11 8 6 12-1 2-6-3-10z" fill="#2478cc"/>
    <circle cx="1337" cy="843" r="2.200" fill="#2478cc"/><path d="M1341 845h3q1 4-3 6" fill="#2478cc"/>
    <rect x="1354" y="840" width="16" height="12" rx="1.500" fill="#2478cc"/><path d="M1356 843h12M1356 846h12M1358 849.500h8" stroke="#fff" stroke-width="1.600" stroke-dasharray="1.800 1"/>
    <g fill="#b6c3dc"><circle cx="1384" cy="842.500" r="3.500"/><path d="M1378 852q0-6 6-6t6 6z"/><path d="M1385.500 847h6.500v6.500h-6.500z" stroke="#fff"/></g><path d="M1387.500 849h2.500v1.500h-2v2h2.500" fill="none" stroke="#fff" stroke-width=".8"/>
    <path d="M1399 842l4-2q3 2 6 0l4 2-1 4h-2v7h-8v-7h-2z" fill="#2478cc"/>
    <path d="M1422 851l6-6q0-5 6-5l-2 3 1 2 3-1q-1 5-6 4l-5 5q-3 1-3-2z" fill="#2478cc"/>
  </svg>
</div>
<script src="grid.js"></script>
</body>
</html>
```
FILE: styles.css
```css
* { box-sizing: border-box; }
body { margin: 0; width: 1440px; height: 875px; overflow: hidden; background: #f0f0f0; color: #000; font: 12px/18px "Noto Sans", "Noto Sans CJK SC", sans-serif; }
svg { display: block; flex: none; }
ul { margin: 0; padding: 0; list-style: none; }
.defs { position: absolute; }
.i18 { width: 18px; height: 18px; }
.mono { font: 12px/18px "Liberation Mono", monospace; letter-spacing: -1.2px; }
.app { display: flex; flex-direction: column; height: 875px; }

.titlebar { display: flex; align-items: center; height: 23px; background: #fff; padding-left: 1px; }
.title { margin-left: 4px; white-space: nowrap; letter-spacing: 0.190px; }
.winctl { margin-left: auto; }

.menubar { display: flex; align-items: center; height: 24px; padding-left: 0; background: #f0f0f0; letter-spacing: 0.100px; }
.menubar .i18 { margin-left: -1px; margin-right: 7px; }
.m-file { width: 35px; } .m-edit { width: 38px; } .m-view { width: 43px; } .m-project { width: 56px; }
.m-source { width: 56px; } .m-process { width: 61px; } .m-add { width: 40px; } .m-tools { width: 46px; }
.m-window { width: 63px; } .m-layout { width: 54px; }

.toolbar { display: flex; height: 28px; border-top: 1px solid #a0a0a0; border-bottom: 2px solid #88888f; }
.group { display: flex; align-items: center; padding-left: 9px; height: 25px; border-right: 1px solid #a0a0a0; background: radial-gradient(circle, #b4b4b4 1px, transparent 1.400px) 3px 2px / 4px 4px repeat-y; }
.group svg { width: 23px; height: 22px; padding: 2px 2px; }
.group i { width: 1px; height: 18px; margin: 0 2px; background: #888; }
.group b { margin-left: 15px; font: bold 15px/18px "Liberation Sans", sans-serif; }
.group .on { width: 24px; background: #bfdcf5; border: 1px solid #8ebfe8; padding: 1px 2px; }
.g1 { width: 133px; } .g2 { width: 185px; } .g3 { width: 179px; padding-left: 10px; } .g4 { width: 104px; }
.g5 { width: 58px; } .g6 { width: 81px; } .g7 { border: 0; }

.workspace { display: flex; height: 624px; }
.dock { display: flex; flex-direction: column; width: 230px; padding-top: 1px; }
.dockhead { display: flex; align-items: center; justify-content: space-between; height: 19px; padding-left: 3px; border: 1px solid #a0a0a0; }
.dockhead span { margin-top: -2px; }
.panel { display: flex; }
.hierarchy { height: 297px; padding-top: 2px; }
.rail { display: flex; flex-direction: column; align-items: center; width: 27px; padding: 4px 2px 0 1px; border-left: 1px solid #fff; }
.rail svg { width: 18px; height: 22px; padding: 2px 0; }
.rail i { width: 19px; height: 1px; margin: 2px 0 3px; background: #8a8a8a; }
.r2 { border: 1px solid #fff; border-right: 0; padding-top: 0; }
.content { flex: 1; min-width: 0; }
.viewrow { display: flex; align-items: center; height: 20px; padding-left: 4px; overflow: hidden; }
.radio { width: 13px; height: 13px; flex: none; margin-left: 1px; border: 1px solid #333; border-radius: 50%; background: #fff; }
.viewrow span { flex: none; }
.radio.sel { background: radial-gradient(circle, #333 3.500px, #fff 4px); }
.chipicon { margin: 0 3px 0 6px; } .simicon { margin: 0 2px 0 6px; }
.treebox { width: 203px; height: 275px; background: #fff; border: 2px solid #828790; border-width: 2px 1px 2px 1px; overflow: hidden; }
.stack { display: grid; height: 256px; overflow: hidden; }
.stack > * { grid-area: 1 / 1; }
.guides { z-index: 1; margin-left: 1px; }
.dot { fill: none; stroke: #999; stroke-dasharray: 1 1; }
.box path { fill: #fff; stroke: #7f8ca0; }
.tree { padding-left: 3px; white-space: nowrap; overflow: hidden; letter-spacing: 0.180px; }
.tree li { display: flex; align-items: center; height: 18px; }
.tree .head { height: 22px; padding: 1px 0 0 1px; margin-bottom: 3px; }
.tree svg { width: 17px; height: 17px; margin-right: 5px; }
.tree .l1 { padding-left: 20px; } .tree .l2 { padding-left: 40px; } .tree .l3 { padding-left: 60px; }
.tree .l2 svg { margin-right: 0; } .tree .l2 .second { width: 16px; height: 16px; margin-right: 5px; }
.tree .cur { background: linear-gradient(#f0f0f0, #f0f0f0) 40px 0 no-repeat; }
.hbar { display: flex; height: 15px; background: #f0f0f0; }
.hbar path, .vbar path { fill: none; stroke: #555; stroke-width: 2; }
.hbar .end { margin-left: auto; }
.hbar s, .vbar s { background: linear-gradient(#f0f0f0, #f0f0f0) center / 10px 10px no-repeat #cdcdcd; }
.t1 { width: 73px; margin-left: 1px; }
.hsplit { height: 7px; padding: 1px 0 0 76px; }
.hsplit i, .bigsplit i { display: block; width: 74px; height: 3px; background: linear-gradient(90deg, #c3c3c3 2px, #fff 2px 3px, transparent 3px) 0 0 / 5px 3px; }
.processes { height: 274px; }
.running { display: flex; align-items: center; height: 27px; padding: 0 0 2px 5px; }
.running span { margin-left: 7px; }
.procbox { display: flex; width: 203px; height: 247px; background: #fff; border: 2px solid #828790; border-width: 2px 1px 1px 1px; }
.procbox .stack { width: 185px; height: 244px; }
.procbox .guides { margin-left: 1px; }
.proc .p1 { padding-left: 19px; } .proc .p2 { padding-left: 39px; }
.proc svg { margin-right: 22px; }
.proc .two svg { width: 17px; margin-right: -1px; } .proc .two svg + svg { width: 17px; margin-right: 6px; }
.proc .head { padding-top: 2px; }
.vbar { display: flex; flex-direction: column; width: 16px; background: #f0f0f0; }
.vbar .end { margin-top: auto; }
.t2 { height: 121px; }
.sidetabs { display: flex; height: 23px; border-top: 1px solid #828790; }
.st { display: flex; align-items: center; height: 22px; border-right: 1px solid #d5d5d5; border-bottom: 1px solid #d5d5d5; white-space: nowrap; }
.st.on { width: 80px; height: 24px; padding-left: 5px; gap: 9px; background: #fff; }
.s2 { width: 71px; padding-left: 3px; gap: 9px; } .s3 { width: 48px; padding-left: 4px; gap: 7px; }
.arrow { width: 15px; height: 21px; border: 1px solid #aaa; }
.arrow.off { background: #d2d2d2; margin-right: 1px; }

.vsplit { width: 5px; padding: 206px 0 0 1px; }
.vsplit i { display: block; width: 3px; height: 202px; background: linear-gradient(#c3c3c3 2px, #fff 2px 3px, transparent 3px) 0 0 / 3px 5px; }
.editor { display: flex; flex-direction: column; width: 1205px; }
.editrow { display: flex; height: 599px; }
.drawbar { display: flex; flex-direction: column; align-items: center; width: 25px; padding-top: 1px; border-left: 1px solid #fff; }
.drawbar > svg { width: 22px; height: 22px; padding: 2px; margin-left: -2px; }
.drawbar .on { width: 23px; background: #c0dcf3; border: 1px solid #8ebfe8; padding: 1px; }
.drawbar i { width: 19px; height: 1px; margin: 2px 0 3px; background: #8a8a8a; }
.lbl { height: 22px; width: 18px; font: bold 9px/11px "Liberation Sans", sans-serif; color: #234aa8; padding-top: 3px; }
.lbl span { display: block; width: 18px; white-space: nowrap; }
.lbl em { display: block; height: 4px; width: 16px; margin-left: 1px; background: linear-gradient(#1689d6, #1689d6) 0 0 / 9px 2px no-repeat, linear-gradient(#1689d6, #1689d6) 7px 2px / 9px 2px no-repeat; }
.lbl.dim { color: #999; filter: grayscale(1); } .lbl.dim em { opacity: .5; }
.a1 { display: grid; height: 22px; width: 20px; justify-items: center; margin-left: -2px; }
.a1 > * { grid-area: 1 / 1; }
.a1 span { margin-top: 2px; font: bold 9px/10px "Liberation Sans", sans-serif; }
.a1 svg { width: 18px; height: 18px; margin-top: 3px; }
.bigA { height: 22px; margin-left: -2px; font: bold 20px/22px "Liberation Serif", serif; color: #2450a8; }
.canvasframe { width: 1180px; border-left: 2px solid #828790; border-right: 1px solid #828790; border-bottom: 2px solid #828790; background: #fff; }
.canvasrow { display: flex; height: 582px; padding-top: 1px; }
.canvasrow .vbar { height: 581px; }
.t3 { height: 209px; margin-top: 116px; }
.wide { width: 1161px; } .canvasframe .t4 { width: 670px; }
.schematic { shape-rendering: crispEdges; }
.net { fill: none; stroke: #00007f; }
.labels { fill: #00007f; font-family: "Liberation Sans", sans-serif; }
.labels .red { fill: #e00; }
.labels .part { stroke: #00007f; stroke-width: 0.300px; }
.sheet { fill: #888; font-family: "Liberation Sans", sans-serif; }

.doctabs { display: flex; height: 24px; }
.dt { display: flex; align-items: center; height: 21px; padding-left: 4px; background: linear-gradient(#cecece, #eee); border: 1px solid #aaa; border-left: 0; }
.dt span { flex: 1; text-align: center; white-space: nowrap; margin-left: -2px; }
.dt u { width: 14px; height: 14px; margin-right: 7px; border: 1px solid #aaa; border-radius: 2px; background: #bbb; color: #fff; font: bold 15px/12px "Liberation Sans", sans-serif; text-decoration: none; letter-spacing: 0; text-align: center; }
.dt.on { height: 24px; background: linear-gradient(#e5e5e5, #f8f8f8); border: 1px solid #aaa; border-bottom: 3px solid #0a6dce; }
.dt.on u { border-color: #d9402a; background: #e27b5c; }
.d1 { width: 329px; } .d2 { width: 228px; } .d3 { width: 168px; } .d4 { width: 160px; } .d5 { width: 160px; }

.bigsplit { height: 6px; padding: 1px 0 0 479px; }
.bigsplit i { width: 478px; }
.errhead { border-left: 0; height: 19px; }
.errbox { margin-top: 2px; height: 87px; border: 1px solid #828790; border-width: 2px 1px 2px 1px; background: #fff; }
.errrow { display: flex; height: 68px; padding-left: 2px; justify-content: space-between; }
.errrow i { width: 19px; background: #f0f0f0; }
.dimbar path { stroke: #bbb; }
.errbox .wide { width: 1422px; } .t5 { width: 126px; margin-left: 1px; }
.bottomtabs { display: flex; height: 24px; padding-left: 2px; }
.bt { display: flex; align-items: center; height: 22px; white-space: nowrap; border-bottom: 1px solid #d5d5d5; border-right: 1px solid #d5d5d5; }
.bt.on { height: 24px; background: #fff; }
.b1 { width: 80px; padding-left: 3px; gap: 9px; } .b2 { width: 82px; padding-left: 7px; gap: 9px; }
.b3 { width: 89px; padding-left: 3px; gap: 9px; } .b4 { width: 166px; padding-left: 5px; gap: 8px; border-right: 0; }
.status { height: 23px; padding: 3px 0 0 1236px; }
.taskbar { height: 15px; background: #00040b; }
.clock { fill: #fff; font: 12px "Noto Sans", sans-serif; }
.ime { position: absolute; left: 1266px; top: 834px; width: 173px; height: 24px; background: #fff; border: 1px solid #a9c2d9; }
.ime svg { margin: -5px 0 0 -13px; }
.ying { fill: #2478cc; font: bold 15px "Noto Sans CJK SC", sans-serif; }
```
FILE: grid.js
```js
// Sheet grid: one dot per snap step, a heavier dot on every fifth step.
const step = 8.61;
let d = "";
for (let r = 0; r < 67; r++) {
  const y = Math.floor(82.5 + r * step);
  for (let c = -5; c < 127; c++) {
    const x = Math.floor(331.2 + c * step);
    if (x < 288 || x > 1418 || y > 655) continue;
    const s = r % 5 === 0 && c % 5 === 0 ? 2 : 1;
    d += `M${x} ${y}h${s}v${s}h-${s}z`;
  }
}
document.getElementById("grid").setAttribute("d", d);
```
